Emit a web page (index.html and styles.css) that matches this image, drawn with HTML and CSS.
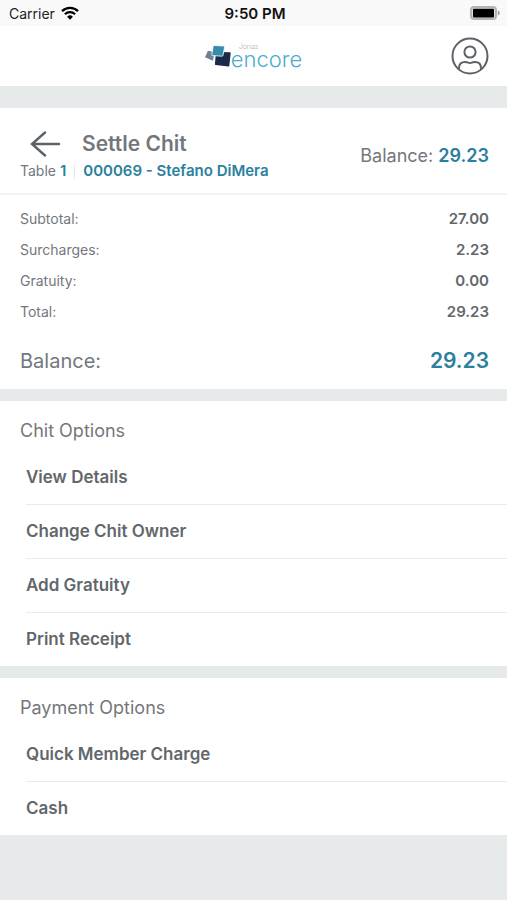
FILE: index.html
```html
<!DOCTYPE html>
<html lang="en">
<head>
<meta charset="utf-8">
<meta name="viewport" content="width=device-width, initial-scale=1">
<title>Settle Chit</title>
<link rel="stylesheet" href="styles.css">
</head>
<body>
<div class="status">
  <div class="carrier">
    <span>Carrier</span>
    <svg class="wifi" viewBox="0 0 18 14" aria-hidden="true">
      <path d="M1 5.2a11.4 11.4 0 0 1 16 0" fill="none" stroke="#000" stroke-width="2.4"/>
      <path d="M3.9 8.2a7.3 7.3 0 0 1 10.2 0" fill="none" stroke="#000" stroke-width="2.2"/>
      <path d="M9 13.7l-2.9-3a4.1 4.1 0 0 1 5.8 0z"/>
    </svg>
  </div>
  <span class="time">9:50 PM</span>
  <svg class="battery" viewBox="0 0 32 16" aria-hidden="true">
    <rect x="2" y="2" width="25" height="12" rx="3" fill="#ddd" stroke="#b4b4b4" stroke-width="2"/>
    <rect x="4" y="3.800" width="21" height="8.800" rx="1"/>
    <path d="M28.800 5.500v5q2-.8 2-2.500t-2-2.500z" fill="#999"/>
  </svg>
</div>

<header class="topbar">
  <div class="logo">
    <svg class="logo-mark" viewBox="0 0 26 22" aria-hidden="true">
      <path d="M2.900 5.800l6.500 1.200-1.400 8.800-7.400-3.200q-.6-.3-.4-.9z" fill="#6f8298"/>
      <path d="M11 7l14 .2q.8 0 .7.800l-1.400 12.900q-.1.800-.9.700L10.600 20q-.8-.1-.7-.9z" fill="#1b2a49"/>
      <path d="M9 .4l9.900.7q.8.100.7.900l-1.600 8.400q-.2.900-1.100.8L7.500 10.600q-.9-.1-.7-1l1.400-8.400q.1-.8.800-.8z" fill="#358daa" stroke="#fff" stroke-width=".8"/>
    </svg>
    <div class="logo-text">
      <span class="logo-brand">Jonas</span>
      <span class="logo-name">encore</span>
    </div>
  </div>
  <button class="profile" type="button" aria-label="Profile">
    <svg viewBox="0 0 38 38" fill="none" stroke="#5d6269" stroke-width="2" aria-hidden="true">
      <circle cx="19" cy="19" r="17.500"/>
      <circle cx="19" cy="15" r="5.600"/>
      <path d="M8 32.500v-1.300q0-6.200 6-6.200 2 0 3.300.6 1.700.6 3.400 0Q22 25 24 25q6 0 6 6.200v1.300"/>
    </svg>
  </button>
</header>

<main>
  <section class="panel">
    <div class="title-row">
      <div>
        <div class="heading">
          <button class="back" type="button" aria-label="Back">
            <svg viewBox="0 0 32 26" fill="none" stroke="#5d6269" stroke-width="2.400" stroke-linecap="round" aria-hidden="true">
              <path d="M29 13H2.500M15 1.500L2 13l13 11.500"/>
            </svg>
          </button>
          <h1>Settle Chit</h1>
        </div>
        <p class="chit-info"><span class="table-no">Table <b>1</b></span><b>000069 - Stefano DiMera</b></p>
      </div>
      <p class="head-balance">Balance: <b>29.23</b></p>
    </div>
    <dl class="totals">
      <div><dt>Subtotal:</dt><dd>27.00</dd></div>
      <div><dt>Surcharges:</dt><dd>2.23</dd></div>
      <div><dt>Gratuity:</dt><dd>0.00</dd></div>
      <div><dt>Total:</dt><dd>29.23</dd></div>
      <div class="balance"><dt>Balance:</dt><dd>29.23</dd></div>
    </dl>
  </section>

  <section class="panel">
    <h2>Chit Options</h2>
    <ul class="options">
      <li><button type="button">View Details</button></li>
      <li><button type="button">Change Chit Owner</button></li>
      <li><button type="button">Add Gratuity</button></li>
      <li><button type="button">Print Receipt</button></li>
    </ul>
  </section>

  <section class="panel">
    <h2>Payment Options</h2>
    <ul class="options">
      <li><button type="button">Quick Member Charge</button></li>
      <li><button type="button">Cash</button></li>
    </ul>
  </section>
</main>
</body>
</html>
```
FILE: styles.css
```css
* {
  box-sizing: border-box;
  margin: 0;
  padding: 0;
}

body {
  background: #e7eaea;
  color: #73777d;
  font-family: Inter, "Liberation Sans", sans-serif;
  font-size: 14px;
}

button {
  background: none;
  border: 0;
  color: inherit;
  cursor: pointer;
  font: inherit;
}

svg {
  display: block;
}

.status,
.topbar {
  display: grid;
  grid-template-columns: 1fr auto 1fr;
  align-items: center;
}

.status {
  height: 26px;
  padding: 0 6px 0 9px;
  background: #f9f9f9;
  color: #222;
}

.carrier {
  display: flex;
  align-items: center;
  gap: 6px;
}

.wifi {
  width: 18px;
  height: 14px;
}

.time {
  color: #111;
  font-size: 15px;
  font-weight: 600;
}

.battery {
  width: 32px;
  height: 16px;
  justify-self: end;
}

.topbar {
  height: 60px;
  padding: 0 18px;
  background: #fff;
}

.logo {
  grid-column: 2;
  display: flex;
  align-items: center;
}

.logo-mark {
  width: 26px;
  height: 22px;
}

.logo-text {
  display: flex;
  flex-direction: column;
  color: #4dabd0;
}

.logo-brand {
  padding-left: 8px;
  color: #888;
  font-size: 7px;
  font-weight: 200;
  line-height: 6px;
}

.logo-name {
  font-size: 22px;
  font-weight: 300;
  line-height: 18px;
}

.profile {
  justify-self: end;
  width: 38px;
  height: 38px;
}

main {
  display: grid;
  gap: 12px;
  padding-top: 22px;
}

.panel {
  background: #fff;
}

.title-row {
  display: flex;
  justify-content: space-between;
  align-items: center;
  padding: 20px 18px 10px 20px;
  border-bottom: 2px solid #f1f2f3;
}

.heading {
  display: flex;
  align-items: center;
  gap: 20px;
  padding-left: 10px;
}

.back {
  width: 32px;
  height: 30px;
}

.back svg {
  width: 32px;
  height: 26px;
}

h1 {
  font-size: 21px;
  font-weight: 600;
  line-height: 31px;
}

.chit-info {
  display: flex;
  line-height: 24px;
}

.chit-info b {
  font-size: 15px;
}

.table-no {
  margin-right: 8px;
}

.chit-info b,
.head-balance b {
  color: #2b809e;
  font-weight: 600;
}

.table-no::after {
  content: "";
  display: inline-block;
  height: 14px;
  margin-left: 8px;
  border-right: 1px solid #e1e5e8;
  vertical-align: middle;
}

.head-balance {
  font-size: 18px;
  line-height: 24px;
}

.totals {
  padding: 8px 18px 9px 20px;
}

.totals div {
  display: flex;
  justify-content: space-between;
  line-height: 31px;
}

.totals dd {
  color: #62676c;
  font-size: 15px;
  font-weight: 600;
}

.totals .balance {
  padding-top: 15px;
  font-size: 20px;
  line-height: 38px;
}

.totals .balance dd {
  color: #2b809e;
  font-size: 21px;
}

h2 {
  padding: 18px 20px 8px;
  font-size: 18px;
  font-weight: 400;
  line-height: 24px;
}

.options {
  padding-left: 26px;
  list-style: none;
}

.options li + li {
  border-top: 1px solid #e9eaec;
}

.options button {
  display: block;
  width: 100%;
  padding: 14px 0 15px;
  color: #62676c;
  font-size: 17px;
  font-weight: 600;
  line-height: 24px;
  text-align: left;
}
```
